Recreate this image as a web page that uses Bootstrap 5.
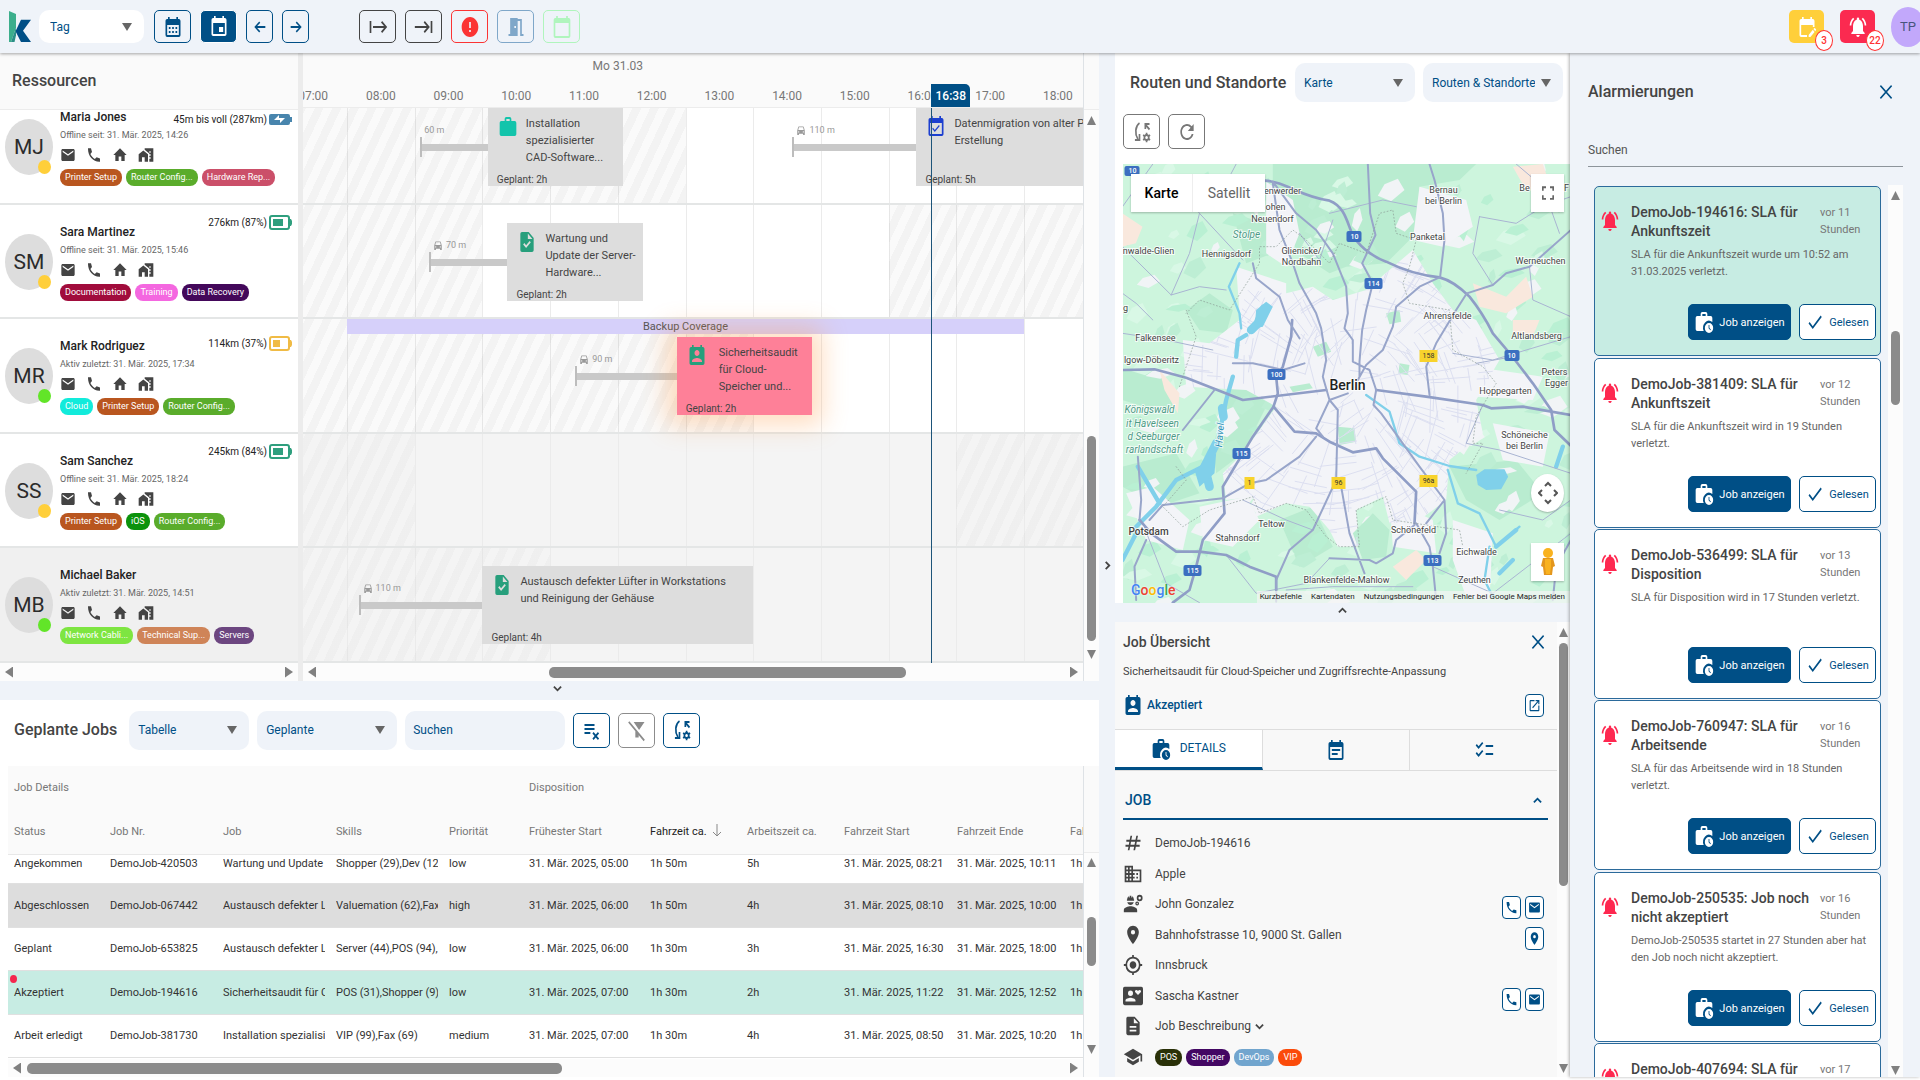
<!DOCTYPE html>
<html lang="de">
<head>
<meta charset="utf-8">
<meta name="viewport" content="width=device-width, initial-scale=1">
<title>Disposition</title>
<link href="https://cdn.jsdelivr.net/npm/bootstrap@5.3.0/dist/css/bootstrap.min.css" rel="stylesheet">
<style>
:root{--navy:#004f86;--mist:#eff3f9;--ink:#444;--soft:#777;--mint:#c7ece3;--hour:8.68%}
body{font-family:Roboto,"Liberation Sans",sans-serif;font-size:12px;line-height:17px;color:var(--ink);background:#fff;height:100vh;overflow:hidden;padding-bottom:3px}
button{font-family:inherit;color:inherit}
main{flex:1 1 0}
.min-0{min-width:0;min-height:0}
.ico{width:20px;height:24px;fill:currentColor;flex:none;display:block}
.ico-s{width:16px;height:18px}
.ico-xs{width:10px;height:11px}
.ico-x{width:14px;height:16px}
.heading{font-size:16px;font-weight:500;line-height:20px;margin:0;white-space:nowrap;color:#444}
/* top bar */
.topbar{height:53px;flex:none;background:var(--mist);box-shadow:0 1px 3px rgba(0,0,0,.35);z-index:5;position:relative;padding:0 0 0 9px}
.brand{width:22px;height:31px;display:block}
.tool{height:33px;width:37px;padding:0;border:1px solid currentColor;border-radius:5px;background:transparent;display:flex;align-items:center;justify-content:center;flex:none}
.tool.slim{width:27px}
.tool.solid{background:var(--navy);color:#fff}
.tool.tall{height:35px;background:#fff}
.tool.filled{width:35px;color:#fff;border:0;position:relative}
.tools{display:flex;gap:9px}
.count{position:absolute;right:-9px;bottom:-8px;width:18px;height:21px;border:1px solid #f33;border-radius:50%;background:#fff;color:#f33;font-size:10px;line-height:19px;font-weight:500}
.user{width:34px;height:40px;border-radius:50%;background:#c2a8fb;color:#46547c;font-size:13px;border:0;padding:0;margin-right:-5px;flex:none}
.ink-navy{color:var(--navy)}
.picker{height:39px;border:0;border-radius:10px;background-color:var(--mist);font-size:12px;color:var(--navy);padding:0 28px 0 9px;background-image:url("data:image/svg+xml,%3Csvg xmlns='http://www.w3.org/2000/svg' viewBox='0 0 10 8'%3E%3Cpath fill='%23666' d='M0 0h10L5 8z'/%3E%3C/svg%3E");background-size:10px 8px;background-position:right 12px center;flex:none;width:140px}
.picker.short{width:120px}
.picker.white{background-color:#fff;height:33px;width:105px;padding-left:11px}
.find{height:39px;border:0;border-radius:10px;background:var(--mist);font-size:12px;padding:0 8px;width:160px;flex:none}
.find::placeholder{color:var(--navy);opacity:1}
/* scroll bars */
.vbar{width:15px;flex:none;background:#fcfcfc;display:flex;flex-direction:column;align-items:center;padding:8px 0}
.hbar{height:18px;flex:none;background:#fcfcfc;display:flex;align-items:center;padding:0 5px}
.thumb{background:#8b8b8b;border-radius:5px;flex:none}
.vbar .thumb{width:9px}.hbar .thumb{height:11px}
.tri{width:9px;height:9px;background:#808080;flex:none;clip-path:polygon(50% 0,100% 100%,0 100%)}
.tri.d{clip-path:polygon(0 0,100% 0,50% 100%)}
.tri.l{clip-path:polygon(100% 0,100% 100%,0 50%);width:8px;height:11px}
.tri.r{clip-path:polygon(0 0,100% 50%,0 100%);width:8px;height:11px}
.handle{height:19px;background:var(--mist);flex:none;display:flex;justify-content:center;align-items:center;border:0;padding:0 0 5px}
.gutter{width:16px;background:var(--mist);flex:none;border:0;padding:0;display:flex;align-items:center;justify-content:center}
.chev{width:9px;height:9px;fill:none;stroke:currentColor;stroke-width:2;display:block}
/* resources */
.res{width:298px;flex:none}
.res-head{height:57px;background:#fafafa;border-bottom:1px solid #ececec;flex:none}
.splitter{width:5px;background:#ececec;flex:none}
.lanes{display:flex;flex-direction:column;justify-content:flex-end;overflow:hidden}
.person,.lane{height:115px;flex:none;border-bottom:2px solid #e4e6e6;position:relative}
.person:nth-child(even),.lane:nth-child(even){height:114px}
.person{display:flex;background:#fff;padding:0 6px 0 5px;gap:7px}
.person:last-child{background:#f0f0f0}
.ava{width:48px;height:56px;border-radius:50%;background:#ddd;color:#2b2b2b;font-size:21px;line-height:56px;text-align:center;flex:none;margin-top:29px;position:relative}
.ava i{position:absolute;right:2px;bottom:1px;width:13px;height:14px;border-radius:50%;background:#ffcf3a}
.ava i.on{background:#62e528}
.who{padding-top:19px}
.who .nm{font-size:12px;font-weight:500;color:#222;line-height:16px}
.who .seen{font-size:9px;color:#666;line-height:20px}
.who .acts{gap:10px;height:19px;align-items:center;display:flex}
.who .acts a{color:#444;display:block}
.batt{position:absolute;right:6px;top:9px;font-size:10px;color:#222;display:flex;gap:2px;align-items:center}
.person:nth-child(odd) .batt{top:16px}
.person:first-child .batt{top:21px}
.batt svg{width:23px;height:17px;display:block}
.chips{gap:4px;margin-top:5px;display:flex;white-space:nowrap}
.chip{font-size:9px;line-height:17px;border-radius:8px;color:#fff;padding:0 5px;background:var(--c)}
/* timeline */
.hours{height:57px;background:#fafafa;border-bottom:1px solid #ececec;position:relative;overflow:hidden;color:var(--soft)}
.day{position:absolute;top:5px;left:calc((11 - 7.35)*var(--hour));width:calc(2*var(--hour));text-align:center}
.hr-label{position:absolute;top:35px;width:var(--hour);left:calc((var(--h) - 7.35)*var(--hour));text-align:center}
.now-tag{position:absolute;left:calc((16.63 - 7.35)*var(--hour));top:31px;width:39px;height:26px;line-height:25px;background:var(--navy);color:#fff;border-radius:0 5px 0 0;text-align:center;font-weight:500}
.now-line{position:absolute;left:calc((16.63 - 7.35)*var(--hour));top:0;bottom:0;width:1px;background:#1d5479;z-index:4}
.lane .rule{position:absolute;top:0;bottom:0;width:1px;background:#ebebeb;left:calc((var(--h) - 7.35)*var(--hour))}
.lane.dim{background:#f4f4f4}
.lane.front{z-index:2}
.slot{position:absolute;left:calc((var(--s) - 7.35)*var(--hour));width:calc(var(--w)*var(--hour))}
.off{top:0;bottom:0;background:repeating-linear-gradient(115deg,rgba(0,0,0,.018) 0 8px,rgba(0,0,0,.048) 8px 16px)}
.dim .off{background:repeating-linear-gradient(115deg,rgba(0,0,0,0) 0 8px,rgba(0,0,0,.02) 8px 16px)}
.drive{top:54px;height:7px;background:#c9c9c9}
.drive::before{content:"";position:absolute;left:0;top:-7px;width:2px;height:20px;background:#bdbdbd}
.drive span{position:absolute;left:4px;top:-21px;font-size:9px;color:#999;white-space:nowrap;display:flex;gap:3px;align-items:center;line-height:14px}
.task{top:18px;height:78px;background:#ddd;padding:7px 0 0 11px;display:flex;gap:8px;white-space:nowrap;font-size:11px;line-height:17px;color:#444}
.task .ico{width:20px;height:24px;margin:0 0 0 -1px}
.task .plan{position:absolute;left:9px;bottom:-2px;font-size:10px}
.task.hot{background:#fe8098;z-index:2;gap:12px;box-shadow:0 0 24px 10px rgba(255,150,60,.32)}
.cover{top:0;height:15px;background:#d6d0fa;text-align:center;font-size:11px;line-height:16px;color:#555}
/* jobs */
.jobs{height:377px;flex:none;background:#fff}
.jobs-bar{height:66px;padding:0 0 6px 14px}
.jobtable{table-layout:fixed;width:100%;font-size:11px;margin:0;white-space:nowrap;color:#333;border-collapse:collapse}
.jobtable th,.jobtable td{padding:0 0 0 6px;overflow:hidden}
.jobtable th{font-weight:400;color:var(--soft);background:#fafafa}
.jobtable th.sorted{color:#222}
.jobtable th svg{width:10px;height:13px;fill:none;stroke:#888;vertical-align:-2px;margin-left:3px}
.jobtable .g th{height:43px}
.jobtable .h th{height:45px;border-bottom:1px solid #e8e8e8}
.jobtable td>div{overflow:hidden;margin-right:5px}
.jobtable tbody td{height:44px;border-bottom:1px solid #e0e0e0}
.jobtable tbody tr:nth-child(odd) td{height:43px}
.jobtable tbody tr:first-child td{height:29px;vertical-align:top}
.jobtable .done td{background:#ddd}
.jobtable .pick td{background:var(--mint)}
.jobtable .pick td:first-child{position:relative}
.reddot{position:absolute;left:2px;top:4px;width:7px;height:8px;border-radius:50%;background:#f5264e}
/* map */
.mid{width:455px;flex:none}
.mid-bar{padding:10px 7px 0 15px}
.mid-tools{padding:12px 8px 15px;color:#777}
.mapbox{margin-left:8px;position:relative;overflow:hidden;background:#cdf5dd}
.mapbox>svg{width:100%;height:100%;display:block}
.mapctl{position:absolute;background:#fff;box-shadow:0 1px 2px rgba(0,0,0,.25);border:0;padding:0;display:flex;align-items:center;justify-content:center;width:33px;height:38px;right:6px;color:#666}
.mapctl.top{top:10px}.mapctl.pan{bottom:91px;border-radius:50%}.mapctl.peg{bottom:22px}
.maptype{position:absolute;left:8px;top:10px;display:flex;background:#fff;box-shadow:0 1px 2px rgba(0,0,0,.25);height:38px}
.maptype button{border:0;background:none;font-size:14px;color:#666;padding:0;width:72px}
.maptype button:first-child{width:62px;color:#000;font-weight:500;border-right:1px solid #eee}
.mapfoot{position:absolute;right:0;bottom:0;background:rgba(245,245,245,.7);font-size:8px;line-height:12px;display:flex;gap:9px;padding:0 5px 0 3px}
.mapfoot a{color:#222;text-decoration:none}
.goog{position:absolute;left:8px;bottom:3px;font-size:14px;line-height:20px;font-weight:500;text-shadow:0 0 2px #fff}
.g1{color:#4285f4}.g2{color:#ea4335}.g3{color:#fbbc05}.g4{color:#34a853}
.mp{font-size:9px;fill:#444;text-anchor:middle;dominant-baseline:central;stroke:#fff;stroke-width:2;paint-order:stroke;stroke-opacity:.75}
.mp .grn{fill:#4e9a86;font-style:italic;font-size:10px}
.mp .blu{fill:#2b8fb5;font-style:italic;font-size:10px}
.mp .big{font-size:14px;font-weight:500;fill:#222}
.mp .mid-town{font-size:10px;font-weight:500}
.mp .sh{fill:#fff;stroke:none;font-size:7px;font-weight:500}
.mp .sy{fill:#333;stroke:none;font-size:7px}
/* job overview */
.over{background:#f8f8f8;flex:none;height:455px}
.ov-title{height:40px}
.ov-title .heading{font-size:14px}
.ov-sub{font-size:11px;line-height:20px}
.ov-state{height:47px;padding-right:5px;font-weight:500}
.ov-tabs{display:flex;border-top:1px solid #ddd;border-bottom:1px solid #ddd;height:42px;flex:none}
.ov-tabs button{flex:1 1 0;border:0;border-right:1px solid #ddd;background:none;color:var(--navy);display:flex;align-items:center;justify-content:center;gap:9px;padding:0}
.ov-tabs button:last-child{border-right:0}
.ov-tabs button.act{background:#fff;border-bottom:3px solid var(--navy)}
.ov-body{padding:12px 9px 0 8px}
.mini{width:19px;height:23px;border:1px solid var(--navy);border-radius:4px;background:#fff;color:var(--navy);padding:0;display:flex;align-items:center;justify-content:center;flex:none}
.mini .ico{width:13px;height:15px}
.ov-sec{height:37px;border:0;border-bottom:2px solid var(--navy);background:none;color:var(--navy);font-weight:500;font-size:14px;padding:0 6px 0 2px;display:flex;align-items:center;justify-content:space-between;width:100%}
.facts{list-style:none;margin:8px 0 0;padding:0}
.facts li{display:flex;align-items:center;height:30px;margin-bottom:1px;padding-right:4px}
.facts li:nth-child(even){margin-bottom:0}
.facts .ico{width:20px;height:22px;margin-right:12px}
.facts .mini{margin:7px 0 0 4px}
.facts .mini:first-of-type{margin-left:auto}
.facts .mini .ico{width:13px;height:15px;margin:0}
/* alarms */
.alarms{width:350px;flex:none;background:var(--mist);box-shadow:-1px 0 3px rgba(0,0,0,.3);z-index:2;padding:27px 17px 0 18px}
.alarm-top{height:24px;flex:none;padding-right:10px}
.alarm-find{border:0;border-bottom:1px solid #8d949b;background:none;font-size:12px;padding:0;height:34px;flex:none;width:100%;border-radius:0;margin:29px 0 18px}
.alarm-find::placeholder{color:#555;opacity:1}
.alarm-list{flex:1 1 0}
.notes{margin:1px 7px 0 6px}
.note{border:1px solid #2b6a9b;border-radius:5px;background:#fff;height:170px;flex:none;padding:16px 4px 15px 5px;display:flex;flex-direction:column;margin-bottom:1px}
.note:nth-child(3n+1){margin-bottom:2px}
.note:first-child{background:var(--mint)}
.note h3{font-size:14px;line-height:19px;font-weight:500;color:#444;margin:0;width:189px;flex:none}
.note .ago{color:var(--soft);line-height:17px;font-size:11px;padding-top:1px}
.note .bell{color:#fe2850;margin:6px 11px 0 0}
.note p{font-size:11px;line-height:17px;margin:5px 0 0 31px;width:244px;color:#666}
.act-btn{height:36px;border-radius:5px;border:1px solid var(--navy);background:#fff;color:var(--navy);font-size:11px;display:flex;align-items:center;justify-content:center;gap:5px;padding:0;width:77px}
.act-btn.main{background:var(--navy);color:#fff;width:103px}
.act-btn .tick{width:18px}
</style>
<script src="https://cdn.jsdelivr.net/npm/bootstrap@5.3.0/dist/js/bootstrap.bundle.min.js"></script>
</head>
<body class="d-flex flex-column">
<svg class="d-none" xmlns="http://www.w3.org/2000/svg">
<symbol id="mail" viewBox="0 0 24 24" preserveAspectRatio="none"><path d="M20 4H4c-1.1 0-2 .9-2 2v12c0 1.1.9 2 2 2h16c1.1 0 2-.9 2-2V6c0-1.1-.9-2-2-2zm0 4l-8 5-8-5V6l8 5 8-5v2z"/></symbol>
<symbol id="phone" viewBox="0 0 24 24" preserveAspectRatio="none"><path d="M3 3h4.500l1.500 5-2.400 2.800c1.400 2.800 3.700 5.100 6.600 6.600L16 15l5 1.500V21h-1C10.600 21 3 13.400 3 4z"/></symbol>
<symbol id="home" viewBox="0 0 24 24" preserveAspectRatio="none"><path d="M10 20v-6h4v6h5v-8h3L12 3 2 12h3v8z"/></symbol>
<symbol id="work-home" viewBox="0 0 24 24" preserveAspectRatio="none"><path d="M1 11v10h5v-6h4v6h5V11L8 6z"/><path d="M10 3v1.970l7 5V11h2v2h-2v2h2v2h-2v4h6V3H10zm9 6h-2V7h2v2z"/></symbol>
<symbol id="cal-month" viewBox="0 0 24 24" preserveAspectRatio="none"><path d="M19 4h-1V2h-2v2H8V2H6v2H5c-1.110 0-1.990.9-1.990 2L3 20a2 2 0 0 0 2 2h14c1.100 0 2-.9 2-2V6c0-1.100-.9-2-2-2zm0 16H5V10h14v10zM9 14H7v-2h2v2zm4 0h-2v-2h2v2zm4 0h-2v-2h2v2zm-8 4H7v-2h2v2zm4 0h-2v-2h2v2zm4 0h-2v-2h2v2z"/></symbol>
<symbol id="cal-day" viewBox="0 0 24 24" preserveAspectRatio="none"><path d="M17 12h-5v5h5v-5zM16 1v2H8V1H6v2H5c-1.110 0-1.990.9-1.990 2L3 19c0 1.100.890 2 2 2h14c1.100 0 2-.9 2-2V5c0-1.100-.9-2-2-2h-1V1h-2zm3 18H5V8h14v11z"/></symbol>
<symbol id="cal-today" viewBox="0 0 24 24" preserveAspectRatio="none"><path d="M20 3h-1V1h-2v2H7V1H5v2H4c-1.100 0-2 .9-2 2v16c0 1.100.9 2 2 2h16c1.100 0 2-.9 2-2V5c0-1.100-.9-2-2-2zm0 18H4V8h16v13z"/></symbol>
<symbol id="cal-edit" viewBox="0 0 24 24" preserveAspectRatio="none"><path d="M5 10h14v2h2V6c0-1.100-.9-2-2-2h-1V2h-2v2H8V2H6v2H5c-1.100 0-2 .9-2 2v14c0 1.100.9 2 2 2h7v-2H5V10zM22.800 14.300l-1.100-1.100a.8.8 0 0 0-1.100 0l-.9.9 2.100 2.100.9-.9a.8.8 0 0 0 .1-1zM19 14.800L14 20v2.100h2.100l5-5.200z"/></symbol>
<symbol id="cal-check" viewBox="0 0 24 24" preserveAspectRatio="none"><path d="M16.530 11.060L15.470 10l-4.880 4.880-2.120-2.120-1.060 1.060L10.590 17l5.940-5.940zM19 3h-1V1h-2v2H8V1H6v2H5c-1.110 0-1.990.9-1.990 2L3 19c0 1.100.890 2 2 2h14c1.100 0 2-.9 2-2V5c0-1.100-.9-2-2-2zm0 16H5V8h14v11z"/></symbol>
<symbol id="cal-note" viewBox="0 0 24 24" preserveAspectRatio="none"><path d="M19 4h-1V2h-2v2H8V2H6v2H5c-1.100 0-2 .9-2 2v14c0 1.100.9 2 2 2h14c1.100 0 2-.9 2-2V6c0-1.100-.9-2-2-2zm0 16H5V9h14v11zM7 11h10v2H7zm0 4h7v2H7z"/></symbol>
<symbol id="contact-cal" viewBox="0 0 24 24" preserveAspectRatio="none"><path d="M19 3h-1V1h-2v2H8V1H6v2H5c-1.110 0-2 .9-2 2v14c0 1.100.890 2 2 2h14c1.100 0 2-.9 2-2V5c0-1.100-.9-2-2-2zm-7 3c1.660 0 3 1.340 3 3s-1.340 3-3 3-3-1.340-3-3 1.340-3 3-3zm6 12H6v-1c0-2 4-3.100 6-3.100s6 1.100 6 3.100v1z"/></symbol>
<symbol id="to-start" viewBox="0 0 24 24" preserveAspectRatio="none"><path d="M2 6h2v12H2zM15.600 7.400L19.200 11H6v2h13.200l-3.600 3.600L17 18l6-6-6-6z"/></symbol>
<symbol id="to-end" viewBox="0 0 24 24" preserveAspectRatio="none"><path d="M11.600 7.400L15.200 11H1v2h14.200l-3.600 3.600L13 18l6-6-6-6zM20 6h2v12h-2z"/></symbol>
<symbol id="arr-l" viewBox="0 0 24 24" preserveAspectRatio="none"><path d="M20 10.800H7.800l4.600-4.600L10.800 4.600 3.500 12l7.300 7.400 1.600-1.600-4.600-4.600H20z"/></symbol>
<symbol id="arr-r" viewBox="0 0 24 24" preserveAspectRatio="none"><path d="M4 10.800h12.200l-4.600-4.600 1.600-1.600 7.300 7.400-7.300 7.400-1.600-1.600 4.600-4.600H4z"/></symbol>
<symbol id="error" viewBox="0 0 24 24" preserveAspectRatio="none"><path d="M12 2C6.480 2 2 6.480 2 12s4.480 10 10 10 10-4.480 10-10S17.520 2 12 2zm1 15h-2v-2h2v2zm0-4h-2V7h2v6z"/></symbol>
<symbol id="door" viewBox="0 0 24 24" preserveAspectRatio="none"><path d="M14 6v15H3v-2h2V3h9v1h5v15h2v2h-4V6h-3zm-4 5v2h2v-2h-2z"/></symbol>
<symbol id="bell" viewBox="0 0 24 24" preserveAspectRatio="none"><path d="M7.580 4.080L6.150 2.650C3.750 4.480 2.170 7.300 2.030 10.500h2c.15-2.650 1.510-4.970 3.550-6.420zm12.390 6.420h2c-.15-3.200-1.730-6.020-4.120-7.850l-1.420 1.430c2.020 1.450 3.390 3.770 3.540 6.420zM18 11c0-3.070-1.640-5.640-4.500-6.320V4c0-.83-.67-1.500-1.500-1.500s-1.500.67-1.500 1.500v.68C7.630 5.360 6 7.920 6 11v5l-2 2v1h16v-1l-2-2v-5zm-6 11c.14 0 .27-.01.4-.04.65-.14 1.180-.58 1.440-1.180.1-.24.15-.5.15-.78h-4c.01 1.100.9 2 2.010 2z"/></symbol>
<symbol id="task-doc" viewBox="0 0 24 24" preserveAspectRatio="none"><path d="M14 2H6c-1.100 0-1.990.9-1.990 2L4 20c0 1.100.890 2 1.990 2H18c1.100 0 2-.9 2-2V8l-6-6zm-3.060 16L7.400 14.460l1.410-1.410 2.120 2.120 4.240-4.240 1.410 1.410L10.940 18zM13 9V3.500L18.500 9H13z"/></symbol>
<symbol id="bag" viewBox="0 0 24 24" preserveAspectRatio="none"><path d="M20 6h-4V4c0-1.110-.89-2-2-2h-4c-1.110 0-2 .89-2 2v2H4c-1.110 0-1.990.89-1.990 2L2 19c0 1.110.89 2 2 2h16c1.110 0 2-.89 2-2V8c0-1.110-.89-2-2-2zm-6 0h-4V4h4v2z"/></symbol>
<symbol id="bag-clock" viewBox="0 0 24 24" preserveAspectRatio="none"><path d="M20 6h-4V4c0-1.100-.9-2-2-2h-4c-1.100 0-2 .9-2 2v2H4c-1.100 0-2 .9-2 2v11c0 1.100.9 2 2 2h7.680A7 7 0 0 1 22 12.100V8c0-1.100-.9-2-2-2zm-6 0h-4V4h4v2z"/><path d="M18 13a5 5 0 1 0 0 10 5 5 0 0 0 0-10zm1.650 7.350L17.500 18.200V15h1v2.790l1.850 1.850-.7.710z"/></symbol>
<symbol id="close" viewBox="0 0 24 24" preserveAspectRatio="none"><path d="M22.500 3.300L20.700 1.500 12 10.200 3.300 1.500 1.500 3.300 10.200 12 1.500 20.700l1.800 1.800L12 13.800l8.700 8.700 1.800-1.800L13.800 12z"/></symbol>
<symbol id="check" viewBox="0 0 24 24" preserveAspectRatio="none"><path d="M9 16.170L4.830 12l-1.420 1.410L9 19 21 7l-1.410-1.410z"/></symbol>
<symbol id="open" viewBox="0 0 24 24" preserveAspectRatio="none"><path d="M19 19H5V5h7V3H5c-1.110 0-2 .9-2 2v14c0 1.100.89 2 2 2h14c1.100 0 2-.9 2-2v-7h-2v7zM14 3v2h3.590l-9.830 9.830 1.410 1.410L19 6.410V10h2V3h-7z"/></symbol>
<symbol id="place" viewBox="0 0 24 24" preserveAspectRatio="none"><path d="M12 2C8.130 2 5 5.130 5 9c0 5.250 7 13 7 13s7-7.750 7-13c0-3.870-3.130-7-7-7zm0 9.500a2.500 2.500 0 0 1 0-5 2.500 2.500 0 0 1 0 5z"/></symbol>
<symbol id="locate" viewBox="0 0 24 24" preserveAspectRatio="none"><path d="M12 8c-2.210 0-4 1.790-4 4s1.790 4 4 4 4-1.790 4-4-1.790-4-4-4zm8.940 3A8.994 8.994 0 0 0 13 3.060V1h-2v2.060A8.994 8.994 0 0 0 3.060 11H1v2h2.060A8.994 8.994 0 0 0 11 20.940V23h2v-2.060A8.994 8.994 0 0 0 20.940 13H23v-2h-2.060zM12 19c-3.870 0-7-3.130-7-7s3.130-7 7-7 7 3.130 7 7-3.130 7-7 7z"/></symbol>
<symbol id="hash" viewBox="0 0 24 24" preserveAspectRatio="none"><path d="M9 4L8 8.500H4v2h3.600L7 14H3v2h3.600l-.9 4h2l.9-4h4.800l-.9 4h2l.9-4H20v-2h-4.100l.7-3.500H21v-2h-4l1-4.500h-2l-1 4.500h-5L11 4zm.6 6.500h5l-.8 3.500H9z"/></symbol>
<symbol id="firm" viewBox="0 0 24 24" preserveAspectRatio="none"><path d="M12 7V3H2v18h20V7H12zM6 19H4v-2h2v2zm0-4H4v-2h2v2zm0-4H4V9h2v2zm0-4H4V5h2v2zm4 12H8v-2h2v2zm0-4H8v-2h2v2zm0-4H8V9h2v2zm0-4H8V5h2v2zm10 12h-8v-2h2v-2h-2v-2h2v-2h-2V9h8v10zm-2-8h-2v2h2v-2zm0 4h-2v2h2v-2z"/></symbol>
<symbol id="engineer" viewBox="0 0 24 24" preserveAspectRatio="none"><path d="M9 14.500c-2.700 0-8 1.300-8 4V21h16v-2.500c0-2.700-5.300-4-8-4zM4.700 8.500h8.600V7H13c0-1.500-.8-2.800-2-3.500V5h-1V3.100H8V5H7V3.500C5.800 4.200 5 5.500 5 7h-.3zM9 13c1.900 0 3.400-1.300 3.900-3H5.100c.5 1.700 2 3 3.900 3z"/><circle cx="20" cy="5.500" r="2.500" fill="none" stroke="currentColor" stroke-width="2"/><circle cx="17" cy="11.500" r="1.500" fill="none" stroke="currentColor" stroke-width="1.500"/></symbol>
<symbol id="idcard" viewBox="0 0 24 24" preserveAspectRatio="none"><path fill-rule="evenodd" d="M2 2h20a2 2 0 0 1 2 2v16a2 2 0 0 1-2 2H2a2 2 0 0 1-2-2V4a2 2 0 0 1 2-2zm7 4a3 3 0 1 0 0 6 3 3 0 0 0 0-6zM3 18h12v-1c0-2-4-3-6-3s-6 1-6 3zM18 11l3.500-3.500c.8-2-2-3-3.500-1-1.500-2-4.300-1-3.500 1z"/></symbol>
<symbol id="doc" viewBox="0 0 24 24" preserveAspectRatio="none"><path d="M14 2H6c-1.100 0-1.990.9-1.990 2L4 20c0 1.100.89 2 1.990 2H18c1.100 0 2-.9 2-2V8l-6-6zm2 16H8v-2h8v2zm0-4H8v-2h8v2zm-3-5V3.500L18.500 9H13z"/></symbol>
<symbol id="school" viewBox="0 0 24 24" preserveAspectRatio="none"><path d="M5 13.180v4L12 21l7-3.820v-4L12 17l-7-3.820zM12 3L1 9l11 6 9-4.910V17h2V9L12 3z"/></symbol>
<symbol id="checklist" viewBox="0 0 24 24" preserveAspectRatio="none"><path d="M23 7h-9v2h9V7zm0 8h-9v2h9v-2zM5.540 11L2 7.460l1.410-1.410 2.120 2.120 4.240-4.240 1.410 1.410L5.540 11zm0 8L2 15.460l1.410-1.410 2.120 2.120 4.240-4.240 1.410 1.410L5.540 19z"/></symbol>
<symbol id="car" viewBox="0 0 24 24" preserveAspectRatio="none"><path d="M18.900 5c-.2-1.200-.8-2-1.900-2H7C5.900 3 5.300 3.800 5.100 5L3 12v9c0 .6.400 1 1 1h2c.6 0 1-.4 1-1v-2h10v2c0 .6.400 1 1 1h2c.6 0 1-.4 1-1v-9zM6.500 16.500a1.500 1.500 0 1 1 0-3 1.500 1.500 0 0 1 0 3zm11 0a1.500 1.500 0 1 1 0-3 1.500 1.500 0 0 1 0 3zM5.500 11L7 5h10l1.500 6z"/></symbol>
<symbol id="reload" viewBox="0 0 24 24" preserveAspectRatio="none"><path d="M17.650 6.350A7.960 7.960 0 0 0 12 4c-4.420 0-7.990 3.580-7.990 8s3.570 8 7.990 8c3.730 0 6.840-2.550 7.730-6h-2.080A5.990 5.990 0 0 1 12 18c-3.310 0-6-2.690-6-6s2.690-6 6-6c1.660 0 3.140.69 4.220 1.780L13 11h7V4l-2.350 2.350z"/></symbol>
<symbol id="sync" viewBox="0 0 24 24" preserveAspectRatio="none"><g fill="none" stroke="currentColor" stroke-width="2"><path d="M9 3C4 6 3 13.500 7 19M9 14v6H3.500M21 9.500L16 4.500M16 9V4h5"/><circle cx="17.500" cy="17.500" r="2.600"/></g><path d="M16.500 12.800h2V15h-2zM16.500 20h2v2.200h-2zM12.800 15.800l1-1.600 2 1.200-1 1.600zM19.200 19.600l1-1.600 2 1.200-1 1.600zM13.800 20.800l-1-1.600 2-1.200 1 1.600zM20.200 17l-1-1.600 2-1.200 1 1.600z"/></symbol>
<symbol id="list-x" viewBox="0 0 24 24" preserveAspectRatio="none"><path d="M3 6h12v2H3zM3 10h12v2H3zM3 14h7v2H3zM13.900 14L12.500 15.400l2.600 2.600-2.600 2.600 1.400 1.400 2.600-2.600 2.600 2.600 1.400-1.400-2.600-2.600 2.600-2.600-1.400-1.400-2.600 2.600z"/></symbol>
<symbol id="filter-off" viewBox="0 0 24 24" preserveAspectRatio="none"><path d="M8 4h13l-6.500 8zM10 13v6.500h4V17zM2.800 3.200L1.400 4.600 20 23.200l1.400-1.400z"/></symbol>
<symbol id="expand" viewBox="0 0 24 24" preserveAspectRatio="none"><path d="M3 3h6v2.500H5.500V9H3zM15 3h6v6h-2.500V5.500H15zM3 15h2.500v3.500H9V21H3zM18.500 15H21v6h-6v-2.500h3.500z"/></symbol>
</svg>

<header class="topbar d-flex align-items-center">
  <a href="#" aria-label="Startseite"><svg class="brand" viewBox="0 0 22 32" preserveAspectRatio="none"><path fill="#3cae8c" d="M0 0l7 3v14L2 32H0z"/><path fill="#004f86" d="M12 9h10l-8 11.500L22 32H12L6.500 21z"/><path fill="#2a8f86" d="M2 32l5-15v8L5.500 32z"/></svg></a>
  <select class="form-select picker white ms-2" aria-label="Ansicht"><option>Tag</option></select>
  <div class="tools ink-navy" style="margin-left:10px">
    <button class="tool" aria-label="Monat"><svg class="ico"><use href="#cal-month"/></svg></button>
    <button class="tool solid" aria-label="Tagesansicht"><svg class="ico"><use href="#cal-day"/></svg></button>
    <button class="tool slim" aria-label="Zurück"><svg class="ico ico-s"><use href="#arr-l"/></svg></button>
    <button class="tool slim" aria-label="Weiter"><svg class="ico ico-s"><use href="#arr-r"/></svg></button>
  </div>
  <div class="tools" style="margin-left:50px">
    <button class="tool" aria-label="Zum Anfang"><svg class="ico"><use href="#to-start"/></svg></button>
    <button class="tool" aria-label="Zum Ende"><svg class="ico"><use href="#to-end"/></svg></button>
    <button class="tool" style="color:#fb3434" aria-label="Fehler"><svg class="ico"><use href="#error"/></svg></button>
    <button class="tool" style="color:#7fa7c9" aria-label="Abwesenheit"><svg class="ico"><use href="#door"/></svg></button>
    <button class="tool" style="color:#b0f5bd" aria-label="Kalender"><svg class="ico"><use href="#cal-today"/></svg></button>
  </div>
  <div class="d-flex gap-3 ms-auto align-items-center">
    <button class="tool filled" style="background:#ffcf3a" aria-label="Planung"><svg class="ico"><use href="#cal-edit"/></svg><span class="count">3</span></button>
    <button class="tool filled" style="background:#fb2a50" aria-label="Alarme"><svg class="ico"><use href="#bell"/></svg><span class="count">22</span></button>
    <button class="user">TP</button>
  </div>
</header>

<main class="d-flex min-0">
 <div class="d-flex flex-column flex-grow-1 min-0">
  <section class="d-flex flex-grow-1 min-0">
   <div class="res d-flex flex-column">
    <div class="res-head d-flex align-items-center ps-2"><h2 class="heading ms-1">Ressourcen</h2></div>
    <div class="lanes flex-grow-1 min-0" id="people"></div>
    <div class="hbar justify-content-between"><span class="tri l"></span><span class="tri r"></span></div>
   </div>
   <div class="splitter"></div>
   <div class="d-flex flex-column flex-grow-1 min-0">
    <div class="hours" id="hours"><div class="day">Mo 31.03</div></div>
    <div class="lanes flex-grow-1 min-0 position-relative">
     <div class="lane"><div class="slot off" style="--s:7;--w:6"></div>
      <div class="slot drive" style="--s:9.08;--w:1"><span>60 m</span></div>
      <div class="slot task" style="--s:10.08;--w:2"><svg class="ico" style="color:#13c4ab"><use href="#bag"/></svg><div>Installation<br>spezialisierter<br>CAD-Software...</div><div class="plan">Geplant: 2h</div></div>
      <div class="slot drive" style="--s:14.58;--w:1.83"><span><svg class="ico ico-xs"><use href="#car"/></svg>110 m</span></div>
      <div class="slot task" style="--s:16.41;--w:5"><svg class="ico" style="color:#1c3fd0"><use href="#cal-check"/></svg><div>Datenmigration von alter Plattform<br>Erstellung</div><div class="plan">Geplant: 5h</div></div></div>
     <div class="lane"><div class="slot off" style="--s:7;--w:3"></div><div class="slot off" style="--s:16;--w:3"></div>
      <div class="slot drive" style="--s:9.21;--w:1.17"><span><svg class="ico ico-xs"><use href="#car"/></svg>70 m</span></div>
      <div class="slot task" style="--s:10.37;--w:2"><svg class="ico" style="color:#279f7c"><use href="#task-doc"/></svg><div>Wartung und<br>Update der Server-<br>Hardware...</div><div class="plan">Geplant: 2h</div></div></div>
     <div class="lane front"><div class="slot off" style="--s:7;--w:7"></div>
      <div class="slot cover" style="--s:8;--w:10">Backup Coverage</div>
      <div class="slot drive" style="--s:11.37;--w:1.5"><span><svg class="ico ico-xs"><use href="#car"/></svg>90 m</span></div>
      <div class="slot task hot" style="--s:12.87;--w:2"><svg class="ico" style="color:#279f7c"><use href="#contact-cal"/></svg><div>Sicherheitsaudit<br>für Cloud-<br>Speicher und...</div><div class="plan">Geplant: 2h</div></div></div>
     <div class="lane dim"><div class="slot off" style="--s:7;--w:2"></div><div class="slot off" style="--s:17;--w:2"></div></div>
     <div class="lane dim"><div class="slot off" style="--s:7;--w:4"></div>
      <div class="slot drive" style="--s:8.17;--w:1.83"><span><svg class="ico ico-xs"><use href="#car"/></svg>110 m</span></div>
      <div class="slot task" style="--s:10;--w:4"><svg class="ico" style="color:#279f7c"><use href="#task-doc"/></svg><div>Austausch defekter Lüfter in Workstations<br>und Reinigung der Gehäuse</div><div class="plan">Geplant: 4h</div></div></div>
     <div class="now-line"></div>
    </div>
    <div class="hbar"><span class="tri l"></span><span style="flex:233 0 0"></span><span class="thumb" style="flex:358 0 0"></span><span style="flex:164 0 0"></span><span class="tri r"></span></div>
   </div>
   <div class="d-flex flex-column border-start">
    <div class="res-head"></div>
    <div class="vbar flex-grow-1" style="padding-top:6px;padding-bottom:22px"><span class="tri"></span><span style="flex:312 0 0"></span><span class="thumb" style="flex:205 0 0"></span><span style="flex:9 0 0"></span><span class="tri d"></span></div>
   </div>
  </section>
  <button class="handle ps-3" aria-label="Einklappen"><svg class="chev" viewBox="0 0 10 10"><path d="M1 3l4 4 4-4"/></svg></button>

  <section class="jobs d-flex flex-column">
   <div class="jobs-bar d-flex align-items-center gap-2">
    <h2 class="heading me-1">Geplante Jobs</h2>
    <select class="form-select picker short" aria-label="Darstellung"><option>Tabelle</option></select>
    <select class="form-select picker" aria-label="Jobart"><option>Geplante</option></select>
    <input class="find" placeholder="Suchen" aria-label="Jobs suchen">
    <button class="tool tall ink-navy" aria-label="Liste leeren"><svg class="ico"><use href="#list-x"/></svg></button>
    <button class="tool tall" style="color:#8c8c8c" aria-label="Filter aus"><svg class="ico"><use href="#filter-off"/></svg></button>
    <button class="tool tall ink-navy" aria-label="Synchronisieren"><svg class="ico"><use href="#sync"/></svg></button>
   </div>
   <div class="d-flex flex-grow-1 min-0 ps-2">
    <div class="d-flex flex-column flex-grow-1 min-0">
     <div class="flex-grow-1 min-0 overflow-hidden">
      <table class="jobtable">
       <colgroup><col style="width:96px"><col style="width:113px"><col style="width:113px"><col style="width:113px"><col style="width:80px"><col style="width:121px"><col style="width:97px"><col style="width:97px"><col style="width:113px"><col style="width:113px"><col></colgroup>
       <thead><tr class="g"><th colspan="5">Job Details</th><th colspan="6">Disposition</th></tr>
       <tr class="h"><th>Status</th><th>Job Nr.</th><th>Job</th><th>Skills</th><th>Priorität</th><th>Frühester Start</th><th class="sorted">Fahrzeit ca. <svg viewBox="0 0 10 13"><path d="M5 0v12M1 8l4 4 4-4"/></svg></th><th>Arbeitszeit ca.</th><th>Fahrzeit Start</th><th>Fahrzeit Ende</th><th>Fahrzeit</th></tr></thead>
       <tbody>
       <tr><td>Angekommen</td><td>DemoJob-420503</td><td><div>Wartung und Update der Server</div></td><td><div>Shopper (29),Dev (12)</div></td><td>low</td><td>31. Mär. 2025, 05:00</td><td>1h 50m</td><td>5h</td><td>31. Mär. 2025, 08:21</td><td>31. Mär. 2025, 10:11</td><td>1h</td></tr>
       <tr class="done"><td>Abgeschlossen</td><td>DemoJob-067442</td><td><div>Austausch defekter Lüfter</div></td><td><div>Valuemation (62),Fax</div></td><td>high</td><td>31. Mär. 2025, 06:00</td><td>1h 50m</td><td>4h</td><td>31. Mär. 2025, 08:10</td><td>31. Mär. 2025, 10:00</td><td>1h</td></tr>
       <tr><td>Geplant</td><td>DemoJob-653825</td><td><div>Austausch defekter Lüfter</div></td><td><div>Server (44),POS (94),Fax</div></td><td>low</td><td>31. Mär. 2025, 06:00</td><td>1h 30m</td><td>3h</td><td>31. Mär. 2025, 16:30</td><td>31. Mär. 2025, 18:00</td><td>1h</td></tr>
       <tr class="pick"><td><span class="reddot"></span>Akzeptiert</td><td>DemoJob-194616</td><td><div>Sicherheitsaudit für Cloud</div></td><td><div>POS (31),Shopper (9),</div></td><td>low</td><td>31. Mär. 2025, 07:00</td><td>1h 30m</td><td>2h</td><td>31. Mär. 2025, 11:22</td><td>31. Mär. 2025, 12:52</td><td>1h</td></tr>
       <tr><td>Arbeit erledigt</td><td>DemoJob-381730</td><td><div>Installation spezialisierter</div></td><td><div>VIP (99),Fax (69)</div></td><td>medium</td><td>31. Mär. 2025, 07:00</td><td>1h 30m</td><td>4h</td><td>31. Mär. 2025, 08:50</td><td>31. Mär. 2025, 10:20</td><td>1h</td></tr>
       </tbody>
      </table>
     </div>
     <div class="hbar"><span class="tri l"></span><span style="flex:6 0 0"></span><span class="thumb" style="flex:535 0 0"></span><span style="flex:508 0 0"></span><span class="tri r"></span></div>
    </div>
    <div class="d-flex flex-column border-start">
     <div class="res-head" style="height:87px"></div>
     <div class="vbar flex-grow-1" style="padding:5px 0 23px"><span class="tri"></span><span style="flex:50 0 0"></span><span class="thumb" style="flex:48 0 0"></span><span style="flex:79 0 0"></span><span class="tri d"></span></div>
    </div>
   </div>
  </section>
 </div>
 <button class="gutter" aria-label="Seitenleiste"><svg class="chev" viewBox="0 0 10 10"><path d="M3 1l4 4-4 4"/></svg></button>

 <div class="mid d-flex flex-column min-0">
  <section class="bg-white d-flex flex-column flex-grow-1 min-0">
   <div class="mid-bar d-flex align-items-center gap-2"><h2 class="heading me-auto">Routen und Standorte</h2>
    <select class="form-select picker short" aria-label="Kartenansicht"><option>Karte</option></select>
    <select class="form-select picker" aria-label="Ebenen"><option>Routen &amp; Standorte</option></select></div>
   <div class="mid-tools d-flex gap-2">
    <button class="tool tall" aria-label="Karte synchronisieren"><svg class="ico"><use href="#sync"/></svg></button>
    <button class="tool tall" aria-label="Neu laden"><svg class="ico"><use href="#reload"/></svg></button></div>
   <div class="mapbox flex-grow-1 min-0">
    <svg viewBox="0 0 448 439" preserveAspectRatio="xMidYMid slice" role="img" aria-label="Karte von Berlin">
     <defs><clipPath id="cityclip"><path id="citypath" d="M440 870L560 880 640 860 700 900 800 870 870 810 940 750 1000 850 1060 930 1130 960 1200 1080 1130 1200 1150 1300 1050 1380 1040 1500 960 1560 870 1570 850 1490 770 1530 780 1640 715 1640 690 1590 630 1520 560 1510 470 1550 460 1490 380 1500 370 1420 430 1360 530 1220 440 1170 260 1160 250 1020 330 1030 420 960z"/></clipPath></defs>
     <g transform="scale(.33333) translate(-69 -492)" fill="none" stroke-linecap="round" stroke-linejoin="round">
      <g fill="#b9ecd0"><path d="M520 492H1130L1080 540 960 560 950 700 860 790 740 800 690 820 600 760 560 700 590 640 520 560z"/><path d="M400 1130L515 1190 430 1360 350 1420 340 1340z"/><path d="M69 1110H180L240 1190 200 1240 69 1200z"/><path d="M260 930L330 880 400 930 380 1000 300 990z"/><path d="M1050 1400L1250 1380 1330 1480 1200 1560 1100 1500z"/><path d="M540 1560L640 1520 700 1640 600 1700z"/><path d="M400 640L530 680 520 760 440 790z"/><path d="M69 1400L230 1360 300 1480 180 1520 69 1460z"/></g>
      <g id="patches"></g>
      <use href="#citypath" fill="#f3f4f8"/>
      <g fill="#f3f4f8"><path d="M500 545L580 600 600 700 560 800 500 760z"/><path d="M960 560L1100 600 1120 680 1030 740 940 720z"/><path d="M410 800L560 850 560 960 420 940z"/><path d="M80 1480L160 1460 270 1560 250 1650 140 1620z"/><path d="M300 1520L440 1490 480 1560 400 1640 310 1620z"/><path d="M1060 1560L1180 1600 1170 1800 1100 1790 1060 1680z"/><path d="M1180 1270L1350 1300 1330 1400 1210 1380z"/><path d="M870 1500L1000 1560 1010 1660 880 1640z"/><path d="M1120 1100L1330 1130 1300 1200 1130 1190z"/></g>
      <g fill="#b9ecd0"><path d="M715 1280l50 5 5 40-50 10zM640 1040l40-15 15 30-40 15zM860 940l40-10 5 35-35 8zM760 1600l60-60 50 50-10 80-70 10zM900 1090l30 5-5 30-28-4zM570 1160l60-10 10 15-60 12z"/></g>
      <g fill="#f9e8dd"><path d="M69 640l60 40-20 50-40 10zM180 1110l60 70-5 60-40-70zM1120 850l100 40 60-60 20 60-80 50-80-20zM1240 500l90-8 20 60-70 20zM1240 960l80 0-20 50-60-10zM880 1700l70-50 30 30-60 60z"/></g>
      <g id="streets" clip-path="url(#cityclip)" stroke="#dcdff0" stroke-width="3"></g>
      <g stroke="#80d0ea"><path stroke-width="7" d="M420 790L388 860 420 940 425 985M800 1185L870 1235 900 1330 960 1370 1050 1398 1130 1410M1045 1410L1075 1510 1140 1540 1190 1640 1260 1580M1170 1640L1155 1740 1180 1790"/><path stroke-width="26" d="M495 925L475 970 455 990M368 1225L372 1250M350 1330L315 1400 330 1460"/><path stroke-width="13" d="M440 1005L415 1020 410 1070M400 1130L380 1200 360 1300M310 1400L230 1440 170 1520 110 1580M115 1400L180 1510M1250 1590L1190 1640M1390 1340L1370 1400M69 1680L110 1600M1200 1720L1240 1680"/></g>
      <path fill="#80d0ea" d="M1130 1425L1155 1408 1215 1408 1226 1430 1205 1468 1160 1470 1135 1455zM285 1410L350 1360 345 1420 300 1460zM470 930L500 905 520 920 490 980 465 985z"/>
      <g stroke="#a9b4d2" stroke-width="3"><path d="M69 740L180 850 215 885 300 860 380 870M240 560L300 640 270 760 215 885M410 492L390 530 250 530 160 560M300 640L430 780M690 640L850 600 950 620M1140 650L1250 670 1330 620 1414 590M1140 650L1120 760 1180 855M69 1000L200 1020 340 1050M1060 1060L1180 1080 1414 1010M1150 1215L1100 1330 1200 1350 1414 1420M130 1570L200 1750 300 1808M380 1665L470 1780 620 1750 690 1675M1000 1700L1180 1780 1414 1600M1200 1530L1330 1560 1414 1500M1290 800L1300 900 1414 950M1240 1070L1130 1090M600 700L660 780 700 660M430 1500L560 1560 640 1590M560 1770L700 1760 940 1760M69 880L110 910 160 960M1250 492L1330 560 1380 700M160 492L69 620"/></g>
      <g stroke="#8f9dc6" stroke-width="8"><path d="M495 542C560 545 600 590 690 602 740 620 745 680 762 710 790 750 830 775 860 785 930 820 980 828 1020 832 1060 842 1090 870 1110 890 1150 940 1165 970 1180 1000L1235 1065 1300 1150 1355 1230 1365 1290 1414 1337"/><path d="M69 1110L165 1108 260 1133 430 1200 680 1170M830 1170L980 1190 1150 1215 1175 1225 1270 1220 1414 1245"/><path d="M578 960L575 1010 550 1100 530 1130 535 1180 522 1220 585 1295 650 1300 690 1325 760 1357 830 1345 850 1375 950 1475 945 1570"/><path d="M522 1220L460 1310 430 1360 370 1460 375 1540 310 1620 290 1700 270 1770 220 1808"/><path d="M120 1560L155 1600 230 1655 300 1655 380 1665 450 1700 530 1730 530 1770"/></g>
      <g stroke="#98a5ca" stroke-width="6"><path d="M805 492L812 640 828 705 788 790 820 850 800 930 788 990 780 1085M990 492L1005 540 1030 640 1035 720 1022 830M1020 832L960 860 890 920 880 980 850 1050 800 1095 775 1140M1102 880L1180 855 1220 820 1290 800 1414 690M1102 880L1070 930 1010 1030 980 1100 990 1185M520 545L590 640 650 690 700 760 740 860 745 940 735 985 760 1020 760 1085 810 1110 830 1170 822 1215 845 1240 960 1400 1035 1500 980 1570M520 550L540 690 580 790 600 850 650 940 665 985 680 1080 670 1130 690 1200 745 1180M460 790L470 835 540 890 565 960 600 1015M400 1090L460 1090 550 1110 615 1090M690 1200L650 1285 670 1310M690 1200L715 1230 710 1440 640 1590 570 1650 530 1740 530 1805M650 1310L600 1370 500 1440 450 1450 370 1495 190 1515 150 1560M115 1370L125 1500 120 1560M110 1800L105 1700 140 1620M725 1460L750 1600 795 1720M690 1675L810 1680 830 1690 880 1660 890 1620 945 1575M1035 1500L1040 1600 1020 1660M950 1570L990 1640 1000 1700 1010 1800M250 1290L345 1170M780 1085L780 1130M1360 1800L1370 1700 1414 1620"/></g>
      <g stroke="#8a9a94" stroke-width="2" stroke-dasharray="3 7"><path d="M260 940L300 900 390 930 480 790 480 740 530 740 580 690 620 720 690 790 720 730 800 760 840 640 880 630 890 700 950 720 930 800 910 850 930 910 1050 930 1060 1050 1150 1100 1190 1150 1130 1250 1120 1330 1150 1330 1100 1420M240 1160L290 1010 260 930M230 1400L260 1440 190 1520 250 1580 330 1530 460 1490 480 1540 560 1510 620 1530 680 1610 720 1640 780 1640 770 1530 860 1490 880 1560 1080 1590 1090 1640"/></g>
     </g>
     <g class="mp">
      <text x="160" y="27">enwerder</text><text x="153" y="43">ohen</text><text x="150" y="55">Neuendorf</text><text class="grn" x="124" y="70">Stolpe</text><text x="104" y="90">Hennigsdorf</text><text x="26" y="87">nwalde-Glien</text><text x="179" y="87">Glienicke/</text><text x="179" y="98">Nordbahn</text><text x="321" y="26">Bernau</text><text x="321" y="37">bei Berlin</text><text x="305" y="73">Panketal</text><text x="418" y="97">Werneuchen</text><text x="325" y="152">Ahrensfelde</text><text x="3" y="144">g</text><text x="402" y="24">Be</text><text x="444" y="24">F</text>
      <text x="33" y="174">Falkensee</text><text x="29" y="196">lgow-Döberitz</text><text class="grn" x="27" y="245">Königswald</text><text class="grn" x="30" y="259">it Havelseen</text><text class="grn" x="31" y="272">d Seeburger</text><text class="grn" x="32" y="285">rarlandschaft</text><text class="blu" x="97" y="271" transform="rotate(-85 97 271)">Havel</text>
      <text class="big" x="225" y="221">Berlin</text><text x="414" y="172">Altlandsberg</text><text x="432" y="208">Peters</text><text x="434" y="219">Egger</text><text x="383" y="227">Hoppegarten</text><text x="402" y="271">Schöneiche</text><text x="402" y="282">bei Berlin</text><text x="149" y="360">Teltow</text><text x="115" y="374">Stahnsdorf</text><text x="26" y="367" class="mid-town">Potsdam</text><text x="291" y="366">Schönefeld</text><text x="354" y="388">Eichwalde</text><text x="352" y="416">Zeuthen</text><text x="224" y="416">Blankenfelde-Mahlow</text>
      <g fill="#3b6fc0" stroke="none"><rect x="2" y="2" width="15" height="10" rx="2"/><rect x="224" y="67" width="15" height="11" rx="2"/><rect x="242" y="114" width="18" height="11" rx="2"/><rect x="382" y="186" width="15" height="11" rx="2"/><rect x="145" y="205" width="18" height="11" rx="2"/><rect x="110" y="284" width="18" height="11" rx="2"/><rect x="61" y="401" width="18" height="11" rx="2"/><rect x="301" y="391" width="18" height="11" rx="2"/></g>
      <g fill="#f8d32c" stroke="none"><rect x="297" y="186" width="18" height="12"/><rect x="122" y="313" width="10" height="12"/><rect x="209" y="313" width="14" height="12"/><rect x="297" y="311" width="18" height="12"/></g>
      <text class="sh" x="10" y="7">10</text><text class="sh" x="232" y="73">10</text><text class="sh" x="251" y="120">114</text><text class="sh" x="389" y="192">10</text><text class="sh" x="154" y="211">100</text><text class="sh" x="119" y="290">115</text><text class="sh" x="70" y="407">115</text><text class="sh" x="310" y="397">113</text>
      <text class="sy" x="306" y="192">158</text><text class="sy" x="127" y="319">1</text><text class="sy" x="216" y="319">96</text><text class="sy" x="306" y="317">96a</text>
     </g>
    </svg>
    <div class="maptype"><button>Karte</button><button>Satellit</button></div>
    <button class="mapctl top" aria-label="Vollbild"><svg class="ico ico-s"><use href="#expand"/></svg></button>
    <button class="mapctl pan" aria-label="Verschieben"><svg width="20" height="24" viewBox="0 0 20 24" fill="none" stroke="#555" stroke-width="2"><path d="M7 5l3-3 3 3M7 19l3 3 3-3M4 9l-3 3 3 3M16 9l3 3-3 3"/></svg></button>
    <button class="mapctl peg" aria-label="Street View"><svg width="14" height="28" viewBox="0 0 14 28"><path fill="#e3961d" d="M2 10h10l2 8-2 1-1 8H3l-1-8-2-1z"/><circle cx="7" cy="5" r="5" fill="#f9b21f"/><path fill="#f9b21f" d="M4 11h6v8l-1 7H5l-1-7z"/></svg></button>
    <div class="goog"><span class="g1">G</span><span class="g2">o</span><span class="g3">o</span><span class="g1">g</span><span class="g4">l</span><span class="g2">e</span></div>
    <div class="mapfoot"><a href="#">Kurzbefehle</a><a href="#">Kartendaten</a><a href="#">Nutzungsbedingungen</a><a href="#">Fehler bei Google Maps melden</a></div>
   </div>
  </section>
  <button class="handle" aria-label="Ausklappen"><svg class="chev" viewBox="0 0 10 10"><path d="M1 7l4-4 4 4"/></svg></button>
  <section class="over d-flex">
   <div class="flex-grow-1 min-0 overflow-hidden d-flex flex-column">
    <div class="px-2">
     <div class="ov-title d-flex align-items-center justify-content-between"><h2 class="heading">Job Übersicht</h2><button class="border-0 bg-transparent p-1 ink-navy" aria-label="Übersicht schließen"><svg class="ico ico-x"><use href="#close"/></svg></button></div>
     <div class="ov-sub">Sicherheitsaudit für Cloud-Speicher und Zugriffsrechte-Anpassung</div>
     <div class="ov-state d-flex align-items-center ink-navy"><svg class="ico me-1"><use href="#contact-cal"/></svg>Akzeptiert<button class="mini ms-auto" aria-label="Öffnen"><svg class="ico"><use href="#open"/></svg></button></div>
    </div>
    <div class="ov-tabs"><button class="act"><svg class="ico"><use href="#bag-clock"/></svg>DETAILS</button><button aria-label="Termine"><svg class="ico"><use href="#cal-note"/></svg></button><button aria-label="Checkliste"><svg class="ico"><use href="#checklist"/></svg></button></div>
    <div class="ov-body">
     <button class="ov-sec">JOB<svg class="chev" viewBox="0 0 10 10"><path d="M1 7l4-4 4 4"/></svg></button>
     <ul class="facts">
      <li><svg class="ico"><use href="#hash"/></svg>DemoJob-194616</li>
      <li><svg class="ico"><use href="#firm"/></svg>Apple</li>
      <li><svg class="ico"><use href="#engineer"/></svg>John Gonzalez<button class="mini" aria-label="Anruf"><svg class="ico"><use href="#phone"/></svg></button><button class="mini" aria-label="Mail"><svg class="ico"><use href="#mail"/></svg></button></li>
      <li><svg class="ico"><use href="#place"/></svg>Bahnhofstrasse 10, 9000 St. Gallen<button class="mini" aria-label="Karte"><svg class="ico"><use href="#place"/></svg></button></li>
      <li><svg class="ico"><use href="#locate"/></svg>Innsbruck</li>
      <li><svg class="ico"><use href="#idcard"/></svg>Sascha Kastner<button class="mini" aria-label="Anruf"><svg class="ico"><use href="#phone"/></svg></button><button class="mini" aria-label="Mail"><svg class="ico"><use href="#mail"/></svg></button></li>
      <li><svg class="ico"><use href="#doc"/></svg>Job Beschreibung<svg class="chev ms-1" viewBox="0 0 10 10"><path d="M1 3l4 4 4-4"/></svg></li>
      <li><svg class="ico"><use href="#school"/></svg><span class="chips m-0"><span class="chip" style="--c:#2a3108">POS</span><span class="chip" style="--c:#430763">Shopper</span><span class="chip" style="--c:#71a5ce">DevOps</span><span class="chip" style="--c:#fb4b0a">VIP</span></span></li>
     </ul>
    </div>
   </div>
   <div class="vbar" style="width:13px;padding:6px 0 4px"><span class="tri"></span><span style="flex:6 0 0"></span><span class="thumb" style="flex:243 0 0"></span><span style="flex:178 0 0"></span><span class="tri d"></span></div>
  </section>
 </div>

 <aside class="alarms d-flex flex-column min-0">
  <div class="alarm-top d-flex justify-content-between align-items-center"><h2 class="heading">Alarmierungen</h2><button class="border-0 bg-transparent p-0 ink-navy" aria-label="Alarmierungen schließen"><svg class="ico ico-x"><use href="#close"/></svg></button></div>
  <input class="alarm-find" placeholder="Suchen" aria-label="Alarmierungen suchen">
  <div class="alarm-list d-flex min-0">
   <div class="notes flex-grow-1 overflow-hidden d-flex flex-column" id="notes"></div>
   <div class="vbar" style="padding:6px 0 2px"><span class="tri"></span><span style="flex:130 0 0"></span><span class="thumb" style="flex:74 0 0"></span><span style="flex:658 0 0"></span><span class="tri d"></span></div>
  </div>
 </aside>
</main>
<script>
const icon=(n,c='')=>`<svg class="ico ${c}"><use href="#${n}"/></svg>`;
// resources: initials, name, last seen, online, skills, range, battery colour, fill width
const brown='#b9561f',green='#5aac2b',teal='#2f9f7e';
const people=[
 ['MJ','Maria Jones','Offline seit: 31. Mär. 2025, 14:26',0,[['Printer Setup',brown],['Router Config...',green],['Hardware Rep...','#cb4f69']],'45m bis voll (287km)','#4885ad',0],
 ['SM','Sara Martinez','Offline seit: 31. Mär. 2025, 15:46',0,[['Documentation','#a10c3c'],['Training','#f467e0'],['Data Recovery','#43085a']],'276km (87%)',teal,10],
 ['MR','Mark Rodriguez','Aktiv zuletzt: 31. Mär. 2025, 17:34',1,[['Cloud','#12ebdb'],['Printer Setup',brown],['Router Config...',green]],'114km (37%)','#f0bb45',7],
 ['SS','Sam Sanchez','Offline seit: 31. Mär. 2025, 18:24',0,[['Printer Setup',brown],['iOS','#0c920c'],['Router Config...',green]],'245km (84%)',teal,10],
 ['MB','Michael Baker','Aktiv zuletzt: 31. Mär. 2025, 14:51',1,[['Network Cabli...','#7ee541'],['Technical Sup...','#cf8458'],['Servers','#6c4680']]]];
const battery=(c,w)=>w?`<svg viewBox="0 0 23 17"><rect x="1" y="2" width="19" height="13" rx="2" fill="#fff" stroke="${c}" stroke-width="2"/><path fill="${c}" d="M4 5h${w}v7H4zM21 5h1l1 2v3l-1 2h-1z"/></svg>`
 :`<svg viewBox="0 0 23 17"><path fill="${c}" d="M2 3h17a2 2 0 0 1 2 2v1h2v5h-2v1a2 2 0 0 1-2 2H2a2 2 0 0 1-2-2V5a2 2 0 0 1 2-2z"/><path fill="#fff" d="M10 4v3h6l-5 5V9H5z"/></svg>`;
document.getElementById('people').innerHTML=people.map(([i,n,s,on,k,r,c,w])=>`<div class="person"><div class="ava">${i}<i class="${on?'on':''}"></i></div><div class="who"><div class="nm">${n}</div><div class="seen">${s}</div><div class="acts">${[['mail','Mail'],['phone','Anruf'],['home','Zuhause'],['work-home','Arbeit']].map(([a,l])=>`<a href="#" aria-label="${l}">${icon(a,'ico-s')}</a>`).join('')}</div><div class="chips">${k.map(([t,b])=>`<span class="chip" style="--c:${b}">${t}</span>`).join('')}</div></div>${r?`<div class="batt">${r}${battery(c,w)}</div>`:''}</div>`).join('');
// alarm cards: title, age in hours, message
const notes=[
 ['DemoJob-194616: SLA für Ankunftszeit',11,'SLA für die Ankunftszeit wurde um 10:52 am 31.03.2025 verletzt.'],
 ['DemoJob-381409: SLA für Ankunftszeit',12,'SLA für die Ankunftszeit wird in 19 Stunden verletzt.'],
 ['DemoJob-536499: SLA für Disposition',13,'SLA für Disposition wird in 17 Stunden verletzt.'],
 ['DemoJob-760947: SLA für Arbeitsende',16,'SLA für das Arbeitsende wird in 18 Stunden verletzt.'],
 ['DemoJob-250535: Job noch nicht akzeptiert',16,'DemoJob-250535 startet in 27 Stunden aber hat den Job noch nicht akzeptiert.'],
 ['DemoJob-407694: SLA für',17,'']];
document.getElementById('notes').innerHTML=notes.map(([t,a,m])=>`<article class="note"><div class="d-flex">${icon('bell','bell')}<h3>${t}</h3><div class="ago">vor ${a}${m?'<br>Stunden':''}</div></div>${m?`<p>${m}</p><div class="d-flex justify-content-end mt-auto gap-2"><button class="act-btn main">${icon('bag-clock')}Job anzeigen</button><button class="act-btn">${icon('check','tick')}Gelesen</button></div>`:''}</article>`).join('');
// hour labels and the vertical hour rules of each lane
const hours=document.getElementById('hours');
for(let h=7;h<=18;h++){const d=document.createElement('div');d.className='hr-label';d.style.setProperty('--h',h);d.textContent=String(h).padStart(2,'0')+':00';hours.append(d);}
const tag=document.createElement('div');tag.className='now-tag';tag.textContent='16:38';hours.append(tag);
document.querySelectorAll('.lane').forEach(l=>{for(let h=18;h>=8;h--){const r=document.createElement('div');r.className='rule';r.style.setProperty('--h',h);l.prepend(r);}});
// minor streets and land patches of the map
let seed=7;const rnd=()=>(seed=(seed*16807)%2147483647)/2147483647;
let s='';for(let i=0;i<420;i++){const x=260+rnd()*900,y=760+rnd()*870,a=Math.atan2(y-1160,x-745)+(rnd()<.5?0:1.57),l=40+rnd()*110;s+=`M${x|0} ${y|0}l${Math.cos(a)*l|0} ${Math.sin(a)*l|0}`;}
document.getElementById('streets').innerHTML=`<path d="${s}"/>`;
let p='';for(let i=0;i<220;i++){const x=69+rnd()*1345,y=492+rnd()*1316,c=['#b9f0d3','#f1f4f6','#d9f8e6','#bdeed4'][i%4],w=12+rnd()*34,h=10+rnd()*26;p+=`<path fill="${c}" d="M${x|0} ${y|0}l${w|0} ${-h/2|0} ${w/2|0} ${h|0} ${-w|0} ${h|0} ${-w|0} ${-h/2|0}z"/>`;}
document.getElementById('patches').innerHTML=p;
</script>
</body>
</html>
